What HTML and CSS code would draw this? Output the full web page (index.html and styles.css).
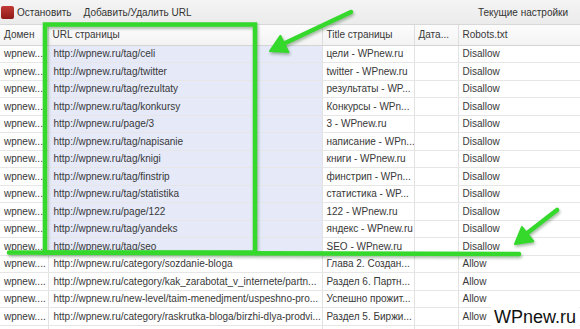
FILE: index.html
```html
<!DOCTYPE html>
<html lang="ru">

<head>
    <meta charset="UTF-8">
    <meta name="viewport" content="width=device-width, initial-scale=1.0">
    <title>Robots.txt</title>
    <link rel="stylesheet" href="styles.css">
</head>

<body>

    <div id="app">
        <div id="toolbar">
            <button class="tool stop"><span class="stop-icon"></span>Остановить</button>
            <button class="tool">Добавить/Удалить URL</button>
            <button class="tool settings">Текущие настройки</button>
        </div>

        <table id="grid">
            <colgroup>
                <col class="c-domain">
                <col class="c-url">
                <col class="c-title">
                <col class="c-date">
                <col class="c-robots">
            </colgroup>
            <thead>
                <tr>
                    <th>Домен</th>
                    <th>URL страницы</th>
                    <th>Title страницы</th>
                    <th>Дата...</th>
                    <th>Robots.txt</th>
                </tr>
            </thead>
            <tbody>
                <tr class="sel"><td>wpnew...</td><td>http://wpnew.ru/tag/celi</td><td>цели - WPnew.ru</td><td></td><td>Disallow</td></tr>
                <tr class="sel"><td>wpnew...</td><td>http://wpnew.ru/tag/twitter</td><td>twitter - WPnew.ru</td><td></td><td>Disallow</td></tr>
                <tr class="sel"><td>wpnew...</td><td>http://wpnew.ru/tag/rezultaty</td><td>результаты - WP...</td><td></td><td>Disallow</td></tr>
                <tr class="sel"><td>wpnew...</td><td>http://wpnew.ru/tag/konkursy</td><td>Конкурсы - WPn...</td><td></td><td>Disallow</td></tr>
                <tr class="sel"><td>wpnew...</td><td>http://wpnew.ru/page/3</td><td>3 - WPnew.ru</td><td></td><td>Disallow</td></tr>
                <tr class="sel"><td>wpnew...</td><td>http://wpnew.ru/tag/napisanie</td><td>написание - WPn...</td><td></td><td>Disallow</td></tr>
                <tr class="sel"><td>wpnew...</td><td>http://wpnew.ru/tag/knigi</td><td>книги - WPnew.ru</td><td></td><td>Disallow</td></tr>
                <tr class="sel"><td>wpnew...</td><td>http://wpnew.ru/tag/finstrip</td><td>финстрип - WPn...</td><td></td><td>Disallow</td></tr>
                <tr class="sel"><td>wpnew...</td><td>http://wpnew.ru/tag/statistika</td><td>статистика - WP...</td><td></td><td>Disallow</td></tr>
                <tr class="sel"><td>wpnew...</td><td>http://wpnew.ru/page/122</td><td>122 - WPnew.ru</td><td></td><td>Disallow</td></tr>
                <tr class="sel"><td>wpnew...</td><td>http://wpnew.ru/tag/yandeks</td><td>яндекс - WPnew.ru</td><td></td><td>Disallow</td></tr>
                <tr class="sel"><td>wpnew...</td><td>http://wpnew.ru/tag/seo</td><td>SEO - WPnew.ru</td><td></td><td>Disallow</td></tr>
                <tr><td>wpnew....</td><td>http://wpnew.ru/category/sozdanie-bloga</td><td>Глава 2. Создан...</td><td></td><td>Allow</td></tr>
                <tr><td>wpnew....</td><td>http://wpnew.ru/category/kak_zarabotat_v_internete/partn...</td><td>Раздел 6. Партн...</td><td></td><td>Allow</td></tr>
                <tr><td>wpnew....</td><td>http://wpnew.ru/new-level/taim-menedjment/uspeshno-pro...</td><td>Успешно прожит...</td><td></td><td>Allow</td></tr>
                <tr><td>wpnew....</td><td>http://wpnew.ru/category/raskrutka-bloga/birzhi-dlya-prodvi...</td><td>Раздел 5. Биржи...</td><td></td><td>Allow</td></tr>
                <tr><td></td><td></td><td></td><td></td><td></td></tr>
            </tbody>
        </table>

        <!-- green marker strokes on top of the grid -->
        <svg id="marks" width="580" height="329" viewBox="0 0 580 329">
            <g class="ink">
                <rect x="45" y="24.5" width="210" height="228" />
                <path d="M9 252.5 L519 254" />
                <path d="M351 12 L283 44" />
                <polygon points="270,51 280.4,35.9 288.4,52.1" />
                <path d="M557 210 L526 234" />
                <polygon points="515,244 522,227 533.2,241.2" />
            </g>
        </svg>

        <div id="watermark">WPnew.ru</div>
    </div>

</body>

</html>
```

FILE: styles.css
```css
body {
    margin: 0;
    padding: 0;
    background-color: #ffffff;
    font-family: 'Liberation Sans', Arial, sans-serif;
    font-size: 10px;
    color: #383838;
    overflow: hidden;
}

#app {
    position: relative;
    width: 580px;
    height: 329px;
    overflow: hidden;
}

#toolbar {
    display: flex;
    align-items: center;
    height: 25px;
    background: linear-gradient(#f4f4f4, #ebebeb);
    border-bottom: 1px solid #d8d8d8;
    box-sizing: border-box;
}

.tool {
    display: flex;
    align-items: center;
    gap: 3px;
    padding: 0 6px 0 0;
    margin-right: 6px;
    border: none;
    background: none;
    font-family: inherit;
    font-size: 10px;
    color: #333;
}

.tool.stop {
    padding-left: 1px;
}

.stop-icon {
    display: block;
    width: 13px;
    height: 13px;
    border-radius: 2px;
    background: linear-gradient(#c23a36, #8e1a18);
}

.tool.settings {
    margin-left: auto;
    margin-right: 6px;
}

#grid {
    border-collapse: collapse;
    table-layout: fixed;
    width: 600px;
}

.c-domain { width: 48px; }
.c-url { width: 274px; }
.c-title { width: 92px; }
.c-date { width: 44px; }
.c-robots { width: 142px; }

#grid th {
    height: 20px;
    padding: 0 4px;
    text-align: left;
    font-weight: normal;
    background: linear-gradient(#fcfcfc, #f3f3f3);
    border-right: 1px solid #dedede;
    border-bottom: 1px solid #d4d4d4;
    white-space: nowrap;
    overflow: hidden;
    box-sizing: border-box;
}

#grid td {
    height: 17.5px;
    padding: 0 4px;
    border-right: 1px solid #e2e2e2;
    border-bottom: 1px solid #e6e6e6;
    white-space: nowrap;
    overflow: hidden;
    box-sizing: border-box;
}

#grid td:nth-child(2) {
    padding-left: 5px;
}

#grid tr.sel td:nth-child(2) {
    background-color: #e5e9f8;
}

#marks {
    position: absolute;
    left: 0;
    top: 0;
    pointer-events: none;
    filter: drop-shadow(1px 2px 1.5px rgba(0, 60, 0, 0.35));
}

.ink rect,
.ink path {
    fill: none;
    stroke: #35d92c;
    stroke-width: 4.5;
    stroke-linecap: round;
}

.ink polygon {
    fill: #35d92c;
    stroke: #35d92c;
    stroke-width: 2;
    stroke-linejoin: round;
}

#watermark {
    position: absolute;
    left: 491px;
    top: 307px;
    padding: 0 3px;
    background-color: #ffffff;
    font-size: 18px;
    line-height: 20px;
    color: #111;
}
```
